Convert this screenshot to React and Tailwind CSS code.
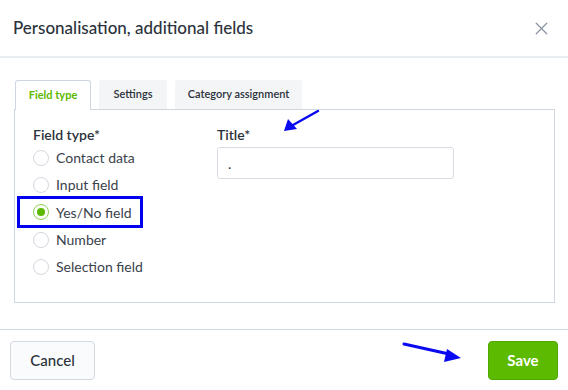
import { X } from "lucide-react";

const OPTIONS = ["Contact data", "Input field", "Yes/No field", "Number", "Selection field"];

function Radio({ checked }) {
  return (
    <span
      className={
        "w-[16px] h-[16px] rounded-full border flex items-center justify-center bg-white " +
        (checked ? "border-[#8fd14f]" : "border-[#d3d8df]")
      }
    >
      {checked && <span className="w-[8px] h-[8px] rounded-full bg-[#5cb800]" />}
    </span>
  );
}

export default function App() {
  return (
    <div className="relative w-[568px] h-[390px] bg-white text-[#2b323b] font-['Lato','Liberation_Sans',sans-serif] overflow-hidden">
      {/* ── Header ── */}
      <div className="h-[58px] flex items-center justify-between pl-[13px] pr-[16px] border-b-2 border-[#e9ecf0]">
        <h1 className="text-[17px] font-medium">Personalisation, additional fields</h1>
        <X className="w-[21px] h-[21px] text-[#8a95a3]" strokeWidth={1.5} />
      </div>

      {/* ── Body ── */}
      <div className="pt-[21px] pl-[14px] pr-[13px] pb-[26px] border-b border-[#d3d9e0]">
        <div className="flex items-end gap-[8px] pl-[1px]">
          <div className="h-[30px] w-[76px] flex items-center justify-center bg-white border border-b-0 border-[#cfd6df] rounded-t-[3px] text-[11px] font-bold text-[#5cb800] relative top-[1px]">
            Field type
          </div>
          <div className="h-[29px] w-[68px] flex items-center justify-center bg-[#f4f5f7] rounded-t-[3px] text-[11px] font-semibold">
            Settings
          </div>
          <div className="h-[29px] w-[127px] flex items-center justify-center bg-[#f4f5f7] rounded-t-[3px] text-[11px] font-semibold">
            Category assignment
          </div>
        </div>
        <div className="h-[194px] border border-[#cfd6df] flex pt-[16px] pl-[18px]">
          <div className="w-[184px]">
            <div className="text-[14px] font-semibold leading-[18px]">Field type*</div>
            <div className="flex flex-col">
              {OPTIONS.map((o, i) => (
                <div key={o} className="h-[27.3px] flex items-center gap-[7px] text-[14px] text-[#3a424c]">
                  <Radio checked={i === 2} />
                  <span>{o}</span>
                </div>
              ))}
            </div>
          </div>
          <div>
            <div className="text-[14px] font-semibold leading-[18px] mb-[3px]">Title*</div>
            <div className="w-[237px] h-[32px] border border-[#d9dde3] rounded-[3px] flex items-center px-[10px] text-[14px]">
              .
            </div>
          </div>
        </div>
      </div>

      {/* ── Footer ── */}
      <div className="flex items-center justify-between pt-[11px] pl-[10px] pr-[10px]">
        <button className="w-[85px] h-[39px] border border-[#d3d9e0] rounded-[4px] bg-[#fafbfc] text-[15px] font-medium">
          Cancel
        </button>
        <button className="w-[70px] h-[39px] rounded-[4px] bg-[#5cba00] border border-[#52a800] text-white text-[15px] font-bold">
          Save
        </button>
      </div>

      {/* annotation overlays */}
      <div className="absolute left-[17px] top-[196px] w-[126px] h-[32px] border-[3px] border-[#0000ee]" />
      <svg className="absolute left-0 top-0 pointer-events-none" width="568" height="390">
        <path d="M318 111 L293 125" stroke="#0a0af0" strokeWidth="2.5" strokeLinecap="round" />
        <path d="M284 131 L288 119 L297 129 Z" fill="#0a0af0" />
        <path d="M404 344 L449 354" stroke="#0a0af0" strokeWidth="3" strokeLinecap="round" />
        <path d="M461 358 L447 349 L444 362 Z" fill="#0a0af0" />
      </svg>
    </div>
  );
}
